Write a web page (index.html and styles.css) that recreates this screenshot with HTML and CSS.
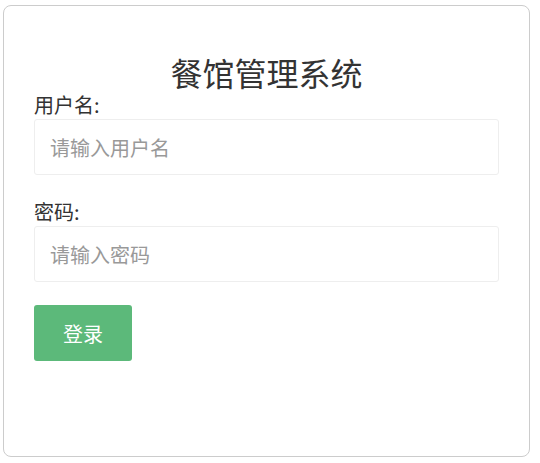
FILE: index.html
```html
<!DOCTYPE html>
<html lang="zh-CN">
<head>
<meta charset="utf-8">
<link rel="stylesheet" href="styles.css">
</head>
<body>
<div class="card">
  <h1 class="title">餐馆管理系统</h1>
  <form class="form">
    <div class="group">
      <label class="label" for="u">用户名:</label>
      <input class="input" id="u" type="text" placeholder="请输入用户名">
    </div>
    <div class="group">
      <label class="label" for="p">密码:</label>
      <input class="input" id="p" type="password" placeholder="请输入密码">
    </div>
    <button class="btn" type="button">登录</button>
  </form>
</div>
</body>
</html>
```
FILE: styles.css
```css
html, body {
  margin: 0;
  padding: 0;
  background: #fff;
}
body {
  font-family: "Noto Sans CJK SC", "Noto Sans", sans-serif;
  color: #333;
}
.card {
  box-sizing: border-box;
  margin: 5px 0 0 3px;
  width: 527px;
  height: 452px;
  border: 1px solid #ccc;
  border-radius: 8px;
  padding: 0 30px;
}
.title {
  margin: 0 0 2px;
  padding-top: 46px;
  font-size: 32px;
  font-weight: normal;
  line-height: 40px;
  text-align: center;
  color: #333;
}
.form {
  display: flex;
  flex-direction: column;
}
.group {
  display: flex;
  flex-direction: column;
  margin-bottom: 26px;
}
.group + .group {
  margin-bottom: 23px;
}
.label {
  display: block;
  font-size: 20px;
  line-height: 22px;
  margin-bottom: 3px;
  color: #333;
}
.input {
  box-sizing: border-box;
  height: 56px;
  width: 465px;
  border: 1px solid #eee;
  border-radius: 3px;
  padding: 0 15px;
  font-family: inherit;
  font-size: 20px;
  color: #333;
  outline: none;
}
.input::placeholder {
  color: #999;
}
.btn {
  box-sizing: border-box;
  width: 98px;
  height: 56px;
  border: none;
  border-radius: 3px;
  background: #5cb97a;
  color: #fff;
  font-family: inherit;
  font-size: 20px;
  padding: 0;
  cursor: pointer;
}
```
